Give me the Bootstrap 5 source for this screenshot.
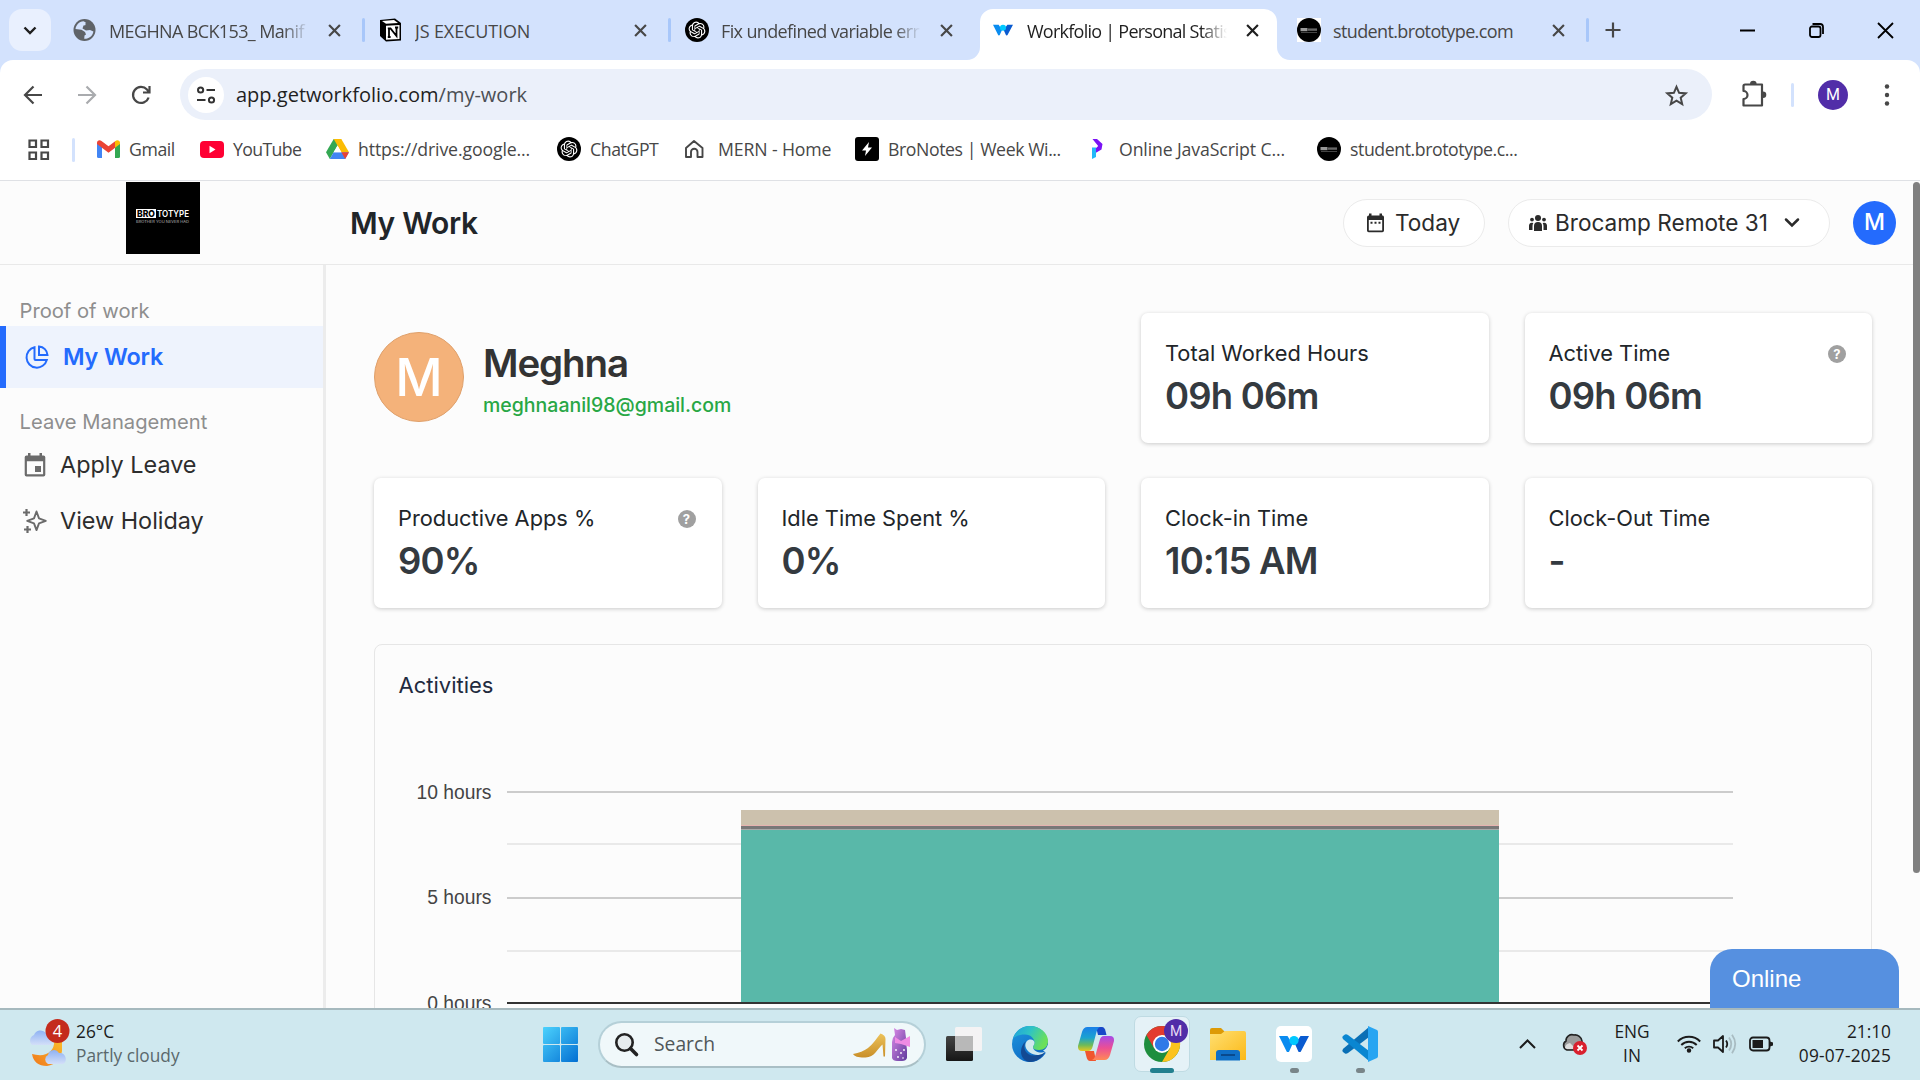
<!DOCTYPE html>
<html lang="en">
<head>
<meta charset="utf-8">
<meta name="viewport" content="width=device-width, initial-scale=1">
<title>Workfolio | Personal Statistics</title>
<link href="https://cdn.jsdelivr.net/npm/bootstrap@5.3.0/dist/css/bootstrap.min.css" rel="stylesheet">
<style>
  body { width: 1920px; height: 1080px; overflow: hidden; background: #fff; font-family: "Open Sans", "Noto Sans", sans-serif; color: #1f1f1f; }
  svg { display: block; flex: none; overflow: visible; }
  .nw { white-space: nowrap; flex: none; }
  .ls-1 { letter-spacing: -.13px; } .ls-4 { letter-spacing: -.42px; } .ls-6 { letter-spacing: -.63px; } .ls-7 { letter-spacing: -.75px; } .ls-p { letter-spacing: .2px; }

  /* browser tabs */
  .tabstrip { height: 60px; background: #d3e2fd; }
  .tab-search { width: 42px; height: 42px; margin-left: 9px; border-radius: 13px; background: #e9f0fe; }
  .tabs-row { margin-left: 7px; }
  .browser-tab { width: 306px; height: 60px; position: relative; padding-left: 15px; font-size: 18px; color: #474747; }
  .browser-tab .favi { width: 24px; height: 24px; flex: none; margin-right: 12px; }
  .browser-tab .tab-text { width: 202px; overflow: hidden; white-space: nowrap; line-height: 30px; padding-top: 2px; }
  .browser-tab .fade-end { -webkit-mask-image: linear-gradient(90deg, #000 86%, transparent 99%); mask-image: linear-gradient(90deg, #000 86%, transparent 99%); }
  .browser-tab .tab-x { margin-left: 17px; }
  .browser-tab.sep::after { content: ""; position: absolute; right: -1px; top: 18px; width: 3px; height: 24px; border-radius: 2px; background: #a8c7fa; }
  .browser-tab.current { color: #1f1f1f; z-index: 1; }
  .browser-tab.current .tab-shape { position: absolute; left: -9px; top: 9px; z-index: -1; }
  .win-btns { margin-left: auto; margin-right: 27px; gap: 54px; }

  /* toolbar */
  .toolbar-wrap { background: #d3e2fd; height: 60px; }
  .toolbar { height: 60px; border-radius: 13px 13px 0 0; padding: 9px 0 0 22px; background: #fff; }
  .nav-arrows { gap: 32px; }
  .omnibox { width: 1532px; height: 51px; margin-left: 28px; border-radius: 26px; background: #ebf0fa; padding-left: 8px; padding-right: 24px; flex: none; }
  .site-info { width: 36px; height: 36px; border-radius: 50%; background: #fff; }
  .url-text { font-size: 20px; margin-left: 12px; }
  .url-text span { color: #4c4f55; }
  .v-line { width: 3px; height: 24px; border-radius: 2px; background: #d3e2fd; flex: none; }
  .puzzle { margin-left: 25px; margin-right: 24px; }
  .profile-m { width: 30px; height: 30px; margin: 0 36px 0 24px; border-radius: 50%; background: #512da8; color: #fff; font-size: 16px; font-family: Roboto, sans-serif; }

  /* bookmarks */
  .bookmarks { height: 61px; border-bottom: 1px solid #dfe1e5; padding: 0 0 1px 28px; font-size: 17.7px; color: #474747; background: #fff; }
  .bookmarks .v-line { margin: 0 22px; }
  .bm svg { margin-right: 9px; }
  .bm:nth-of-type(2) { width: 103px; } .bm:nth-of-type(3) { width: 126px; } .bm:nth-of-type(4) { width: 231px; }
  .bm:nth-of-type(5) { width: 126px; } .bm:nth-of-type(6) { width: 172px; } .bm:nth-of-type(7) { width: 233px; }
  .bm:nth-of-type(8) { width: 229px; }

  /* application */
  .app { height: 827px; width: 1920px; background: #fcfcfc; font-family: Inter, "Liberation Sans", sans-serif; position: relative; overflow: hidden; }
  .app-header { height: 84px; width: 1913px; border-bottom: 1px solid #e9e9e9; padding-right: 17px; }
  .brand-tile { width: 74px; height: 72px; margin: 1px 0 0 126px; background: #000; color: #fff; }
  .page-title { font-size: 30px; font-weight: 600; letter-spacing: -.3px; margin-left: 150px; padding-top: 2px; color: #212529; }
  .pill-btn { height: 48px; border: 1px solid #ebebeb; border-radius: 24px; background: #fff; font-size: 22.6px; color: #2b2b2b; flex: none; }
  .pill-day { width: 142px; padding: 0 0 0 22px; gap: 10px; margin-right: 23px; }
  .pill-team { width: 322px; padding: 0 0 0 20px; margin-right: 23px; }
  .pill-team .nw { margin: 0 16px 0 8px; }
  .user-dot { width: 43px; height: 44px; border-radius: 50%; background: #246bfd; color: #fff; font-size: 23px; font-weight: 500; flex: none; }
  .scroll-thumb { position: absolute; right: 0; top: 1px; width: 7px; height: 691px; border-radius: 4px; background: #808080; }

  .side { width: 326px; height: 743px; border-right: 3px solid #ececec; padding-top: 31px; }
  .side-label { font-size: 20.2px; line-height: 30px; color: #8e8e8e; padding-left: 19.5px; }
  .side-label.later { padding-top: 19px; }
  .side-item { height: 56px; font-size: 23.4px; color: #2d2d2d; padding-left: 23px; gap: 13px; }
  .side-item.on { height: 62px; border-left: 6px solid #246bfd; padding-left: 19px; gap: 14px; background: #eef3fd; color: #246bfd; font-weight: 600; letter-spacing: -.15px; }

  .content { width: 1498px; margin-left: 48px; padding-top: 48px; }
  .stat-grid { display: grid; grid-template-columns: repeat(4, 347.5px); column-gap: 36px; row-gap: 35px; }
  .person { grid-column: span 2; gap: 19px; }
  .big-avatar { width: 90px; height: 90px; margin-bottom: 2px; border-radius: 50%; background: #f4b27a; border: 1px solid #dfa06b; color: #fff; font-size: 52px; font-weight: 500; padding-top: 2px; }
  .person-name { font-size: 38.5px; font-weight: 600; letter-spacing: -1.1px; line-height: 50px; color: #333; }
  .person-mail { font-size: 19.5px; font-weight: 500; line-height: 34px; color: #28a745; }
  .stat { height: 130px; border: 0; border-radius: 7px; background: #fff; box-shadow: 0 1px 4px rgba(0,0,0,.2); padding: 25px 26px 0 24px; }
  .stat-label { font-size: 21.8px; line-height: 30px; color: #212529; }
  .stat-value { font-size: 36.5px; font-weight: 600; letter-spacing: -.8px; line-height: 46px; margin-top: 5px; color: #343a40; }
  .qmark { width: 18px; height: 18px; margin-top: 2px; border-radius: 50%; background: #a0a0a0; color: #fff; font-size: 13px; font-weight: 700; line-height: 18px; }
  .activity { height: 420px; margin-top: 36px; border: 1px solid #e6e6e6; border-radius: 8px; background: transparent; }
  .activity-title { font-size: 22px; line-height: 30px; padding: 25px 0 0 23.5px; color: #212a3e; }
  .axis { font-family: "Liberation Sans", Arial, sans-serif; font-size: 19.3px; fill: #444; }
  .online-tab { position: absolute; left: 1710px; bottom: 0; width: 189px; height: 59px; border-radius: 22px 22px 0 0; background: #5690e0; color: #fff; font-family: "Liberation Sans", Arial, sans-serif; font-size: 24px; padding-left: 22px; }

  /* taskbar */
  .taskbar { height: 72px; background: #cfe8ef; border-top: 2px solid #a6b9be; padding-bottom: 2px; }
  .tb-text { font-size: 17.3px; line-height: 24px; color: #1b1b1b; }
  .weather { width: 543px; padding-left: 28px; gap: 6px; }
  .weather .dim { color: #5b686c; }
  .search-pill { width: 328px; height: 47px; border: 2px solid #b5d0d8; border-bottom-color: #a9bfc5; border-radius: 24px; background: #f0f8fa; margin: 0 5px 0 20px; padding: 0 13px 0 15px; font-size: 19.3px; color: #505759; }
  .task-app { width: 66px; height: 70px; position: relative; }
  .task-app .tile { position: absolute; left: 5px; top: 7px; width: 56px; height: 56px; border-radius: 7px; background: #e5f2f7; border: 1px solid #bfdbe3; }
  .task-app .run { position: absolute; left: 28.5px; top: 59px; width: 9px; height: 5px; border-radius: 3px; background: #798589; }
  .task-app .run.wide { left: 21px; width: 24px; background: #23808f; }
  .tray { margin-left: auto; padding-right: 29px; }
  .tray-lang { width: 60px; margin: 0 15px 0 14px; }
  .tray-status { gap: 12px; }
  .tray-clock { width: 118px; }
</style>
<script src="https://cdn.jsdelivr.net/npm/bootstrap@5.3.0/dist/js/bootstrap.bundle.min.js"></script>
</head>
<body>
<svg width="0" height="0" class="position-absolute">
  <defs>
    <symbol id="x" viewBox="0 0 12 12"><path d="M1 1l10 10M11 1L1 11" stroke="currentColor" stroke-width="2" fill="none"/></symbol>
    <symbol id="gpt" viewBox="0 0 24 24"><circle cx="12" cy="12" r="12" fill="#000"/>
      <path transform="translate(3.600 3.600) scale(.7)" fill="#fff" d="M22.2819 9.8211a5.9847 5.9847 0 0 0-.5157-4.9108 6.0462 6.0462 0 0 0-6.5098-2.9A6.0651 6.0651 0 0 0 4.9807 4.1818a5.9847 5.9847 0 0 0-3.9977 2.9 6.0462 6.0462 0 0 0 .7427 7.0966 5.98 5.98 0 0 0 .511 4.9107 6.051 6.051 0 0 0 6.5146 2.9001A5.9847 5.9847 0 0 0 13.2599 24a6.0557 6.0557 0 0 0 5.7718-4.2058 5.9894 5.9894 0 0 0 3.9977-2.9001 6.0557 6.0557 0 0 0-.7475-7.0729zm-9.022 12.6081a4.4755 4.4755 0 0 1-2.8764-1.0408l.1419-.0804 4.7783-2.7582a.7948.7948 0 0 0 .3927-.6813v-6.7369l2.02 1.1686a.071.071 0 0 1 .038.052v5.5826a4.504 4.504 0 0 1-4.4945 4.4944zm-9.6607-4.1254a4.4708 4.4708 0 0 1-.5346-3.0137l.142.0852 4.783 2.7582a.7712.7712 0 0 0 .7806 0l5.8428-3.3685v2.3324a.0804.0804 0 0 1-.0332.0615L9.74 19.9502a4.4992 4.4992 0 0 1-6.1408-1.6464zM2.3408 7.8956a4.485 4.485 0 0 1 2.3655-1.9728V11.6a.7664.7664 0 0 0 .3879.6765l5.8144 3.3543-2.0201 1.1685a.0757.0757 0 0 1-.071 0l-4.8303-2.7865A4.504 4.504 0 0 1 2.3408 7.872zm16.5963 3.8558L13.1038 8.364 15.1192 7.2a.0757.0757 0 0 1 .071 0l4.8303 2.7913a4.4944 4.4944 0 0 1-.6765 8.1042v-5.6772a.79.79 0 0 0-.407-.667zm2.0107-3.0231l-.142-.0852-4.7735-2.7818a.7759.7759 0 0 0-.7854 0L9.409 9.2297V6.8974a.0662.0662 0 0 1 .0284-.0615l4.8303-2.7866a4.4992 4.4992 0 0 1 6.6802 4.66zM8.3065 12.863l-2.02-1.1638a.0804.0804 0 0 1-.038-.0567V6.0742a4.4992 4.4992 0 0 1 7.3757-3.4537l-.142.0805L8.704 5.459a.7948.7948 0 0 0-.3927.6813zm1.0976-2.3654l2.602-1.4998 2.6069 1.4998v2.9994l-2.5974 1.4997-2.6067-1.4997Z"/></symbol>
    <symbol id="bro" viewBox="0 0 24 24"><circle cx="12" cy="12" r="12" fill="#000"/><rect x="3.500" y="10" width="7" height="3.200" fill="#999"/><rect x="11" y="10.400" width="9" height="2.400" fill="#666"/><rect x="4" y="14" width="16" height=".8" fill="#555"/></symbol>
    <symbol id="wf" viewBox="0 0 30 16"><path d="M0 0h8.500l5 8-3.200 7.200a1.500 1.500 0 0 1-2.800 0z" fill="#0a8cf0"/><path d="M30 0h-8.500l-5.500 8 3.200 7.200a1.500 1.500 0 0 0 2.800 0z" fill="#0a5bd0"/><circle cx="15" cy="4.600" r="4.600" fill="#00c8ff"/></symbol>
    <linearGradient id="win" gradientUnits="userSpaceOnUse" x1="0" y1="0" x2="35" y2="35"><stop offset="0" stop-color="#4cd2fd"/><stop offset="1" stop-color="#036fd2"/></linearGradient>
    <linearGradient id="cl" x1="0" y1="0" x2="0" y2="1"><stop offset="0" stop-color="#8fb2f3"/><stop offset="1" stop-color="#d3dff8"/></linearGradient>
    <linearGradient id="moon" x1="0" y1="1" x2="1" y2="0"><stop offset="0" stop-color="#f0781c"/><stop offset="1" stop-color="#fbc02d"/></linearGradient>
    <linearGradient id="e1" x1="0" y1="0" x2="1" y2=".4"><stop offset="0" stop-color="#1e9fe0"/><stop offset=".5" stop-color="#2fc3c4"/><stop offset="1" stop-color="#6be05a"/></linearGradient>
    <linearGradient id="e2" x1="0" y1="0" x2=".6" y2="1"><stop offset="0" stop-color="#1f97de"/><stop offset="1" stop-color="#0d68c4"/></linearGradient>
    <linearGradient id="c1" x1="0" y1="0" x2="0" y2="1"><stop offset="0" stop-color="#1a7fe8"/><stop offset=".45" stop-color="#1ba3d0"/><stop offset=".75" stop-color="#6cba5a"/><stop offset="1" stop-color="#e8c81e"/></linearGradient>
    <linearGradient id="c2" x1="0" y1="0" x2="0" y2="1"><stop offset="0" stop-color="#a54be8"/><stop offset=".5" stop-color="#ec4f94"/><stop offset="1" stop-color="#ff8a55"/></linearGradient>
    <linearGradient id="fold" x1="0" y1="0" x2="1" y2="1"><stop offset="0" stop-color="#ffdf72"/><stop offset="1" stop-color="#fbb917"/></linearGradient>
    <linearGradient id="perf" x1="0" y1="0" x2="1" y2="1"><stop offset="0" stop-color="#dc8be8"/><stop offset="1" stop-color="#5e3a9c"/></linearGradient>
    <linearGradient id="shoe" x1="0" y1="0" x2="0" y2="1"><stop offset="0" stop-color="#ecc25a"/><stop offset="1" stop-color="#c98f28"/></linearGradient>
    <linearGradient id="tv" x1="0" y1="0" x2="0" y2="1"><stop offset="0" stop-color="#444"/><stop offset="1" stop-color="#161616"/></linearGradient>
  </defs>
</svg>

<!-- tab strip -->
<div class="tabstrip d-flex align-items-center">
  <button class="btn p-0 tab-search d-flex align-items-center justify-content-center border-0"><svg width="14" height="9" viewBox="0 0 14 9"><path d="M1.500 1.500L7 7l5.500-5.500" fill="none" stroke="#1f1f1f" stroke-width="2.400"/></svg></button>
  <div class="tabs-row d-flex">
    <div class="browser-tab sep d-flex align-items-center">
      <svg class="favi" viewBox="0 0 24 24"><circle cx="11.500" cy="12" r="11" fill="#5f6368"/><path d="M10.500 3.200C6 3.500 3 7 2.500 11l6 .8 3.500 2.200 1 2.500-1.500 1-.3 3.300c5 .2 8.500-3 9.200-7.300l-3.400-1.500-4 .5-3.500-2 1-3 3-.5.5-2z" fill="#d3e2fd"/><path d="M12.500 4.500l2-1 3.500 2 2 4.500-4.500.5-3-2z" fill="#5f6368"/></svg>
      <div class="tab-text fade-end"><span class="nw ls-6">MEGHNA BCK153_ Manif</span></div><svg class="tab-x" width="13" height="13"><use href="#x"/></svg>
    </div>
    <div class="browser-tab sep d-flex align-items-center">
      <svg class="favi" viewBox="0 0 24 24"><path d="M1 2l15-1.500L22 5v17.500L7 23.500 1 18z" fill="#000"/><path d="M3 3l12-1 4 3-12 .8z" fill="#fff"/><path d="M7 7.800l13.500-.9v14l-13.500.9z" fill="#fff"/><path d="M10 19v-8.500l1.500 0L17.500 18V9.500M8.800 10.400h3M16 9.500h3.200M8.800 19h2.800" fill="none" stroke="#000" stroke-width="1.800"/></svg>
      <div class="tab-text"><span class="nw ls-1">JS EXECUTION</span></div><svg class="tab-x" width="13" height="13"><use href="#x"/></svg>
    </div>
    <div class="browser-tab d-flex align-items-center">
      <svg class="favi"><use href="#gpt"/></svg>
      <div class="tab-text fade-end"><span class="nw ls-6">Fix undefined variable err</span></div><svg class="tab-x" width="13" height="13"><use href="#x"/></svg>
    </div>
    <div class="browser-tab current d-flex align-items-center">
      <svg class="tab-shape" width="323" height="51" viewBox="0 0 323 51"><path d="M0 51a13 13 0 0 0 13-13V13A13 13 0 0 1 26 0h271a13 13 0 0 1 13 13v25a13 13 0 0 0 13 13z" fill="#fff"/></svg>
      <svg class="favi" viewBox="0 0 24 24"><use href="#wf" x="2" y="6" width="20" height="12"/></svg>
      <div class="tab-text fade-end"><span class="nw ls-7">Workfolio | Personal Statis</span></div><svg class="tab-x" width="13" height="13"><use href="#x"/></svg>
    </div>
    <div class="browser-tab sep d-flex align-items-center">
      <svg class="favi"><rect width="24" height="24" fill="#fff"/><use href="#bro"/></svg>
      <div class="tab-text"><span class="nw ls-6">student.brototype.com</span></div><svg class="tab-x" width="13" height="13"><use href="#x"/></svg>
    </div>
  </div>
  <svg class="ms-3" width="18" height="18" viewBox="0 0 18 18"><path d="M9 1.500v15M1.500 9h15" stroke="#474747" stroke-width="2.200"/></svg>
  <div class="win-btns d-flex align-items-center">
    <svg width="15" height="15"><path d="M0 7.500h15" stroke="#000" stroke-width="2"/></svg>
    <svg width="15" height="15" viewBox="0 0 15 15" fill="none" stroke="#000" stroke-width="1.800"><rect x="1" y="3.500" width="10.500" height="10.500" rx="2"/><path d="M3.500 1H11a3 3 0 0 1 3 3v7"/></svg>
    <svg width="15" height="15"><path d="M0 0l15 15M15 0L0 15" stroke="#000" stroke-width="1.800"/></svg>
  </div>
</div>

<!-- toolbar -->
<div class="toolbar-wrap">
  <div class="toolbar d-flex align-items-center">
    <div class="nav-arrows d-flex">
      <svg width="22" height="22" viewBox="0 0 22 22" fill="none" stroke="#474747" stroke-width="2.200"><path d="M20 11H3.500M11.500 2.500L3 11l8.500 8.500"/></svg>
      <svg width="22" height="22" viewBox="0 0 22 22" fill="none" stroke="#a9abae" stroke-width="2.200"><path d="M2 11h16.500M10.500 2.500L19 11l-8.500 8.500"/></svg>
      <svg width="22" height="22" viewBox="0 0 22 22" fill="none" stroke="#474747" stroke-width="2.200"><path d="M18.600 13.500A8 8 0 1 1 17 5.600L19 8M19.500 2v6.500H13"/></svg>
    </div>
    <div class="omnibox d-flex align-items-center">
      <div class="site-info d-flex align-items-center justify-content-center"><svg width="18" height="18" viewBox="0 0 18 18" fill="none" stroke="#333" stroke-width="2"><circle cx="3.600" cy="4" r="2.600"/><path d="M9.500 4H18M0 14h8.500"/><circle cx="14.500" cy="14" r="2.600"/></svg></div>
      <div class="url-text nw">app.getworkfolio.com<span>/my-work</span></div>
      <svg class="ms-auto" width="23" height="22" viewBox="0 0 23 22"><path d="M11.500 2.800l2.600 6 6.600.6-5 4.300 1.500 6.400-5.700-3.400-5.700 3.400 1.500-6.400-5-4.300 6.600-.6z" fill="none" stroke="#474747" stroke-width="2"/></svg>
    </div>
    <svg class="puzzle" width="30" height="28" viewBox="-4 1 30 28"><path d="M4 4.500h17v21H2.500v-6.500a3.500 3.500 0 0 0 0-8V6A1.500 1.500 0 0 1 4 4.500z" fill="none" stroke="#474747" stroke-width="2.200" stroke-linejoin="round"/><path d="M9 4a3.300 3.300 0 0 1 6.600 0zM22 11.500a3.300 3.300 0 0 1 0 6.600z" fill="#474747"/></svg>
    <div class="v-line"></div>
    <div class="profile-m d-flex align-items-center justify-content-center">M</div>
    <svg width="6" height="26" fill="#474747"><circle cx="3" cy="4.500" r="2.200"/><circle cx="3" cy="13" r="2.200"/><circle cx="3" cy="21.500" r="2.200"/></svg>
  </div>
</div>

<!-- bookmarks bar -->
<nav class="bookmarks d-flex align-items-center">
  <svg width="22" height="22" fill="none" stroke="#474747" stroke-width="2.200"><path d="M1.500 1.500h6.500v6.500H1.500zM13.500 1.500H20v6.500h-6.500zM1.500 13.500h6.500V20H1.500zM13.500 13.500H20V20h-6.500z"/></svg>
  <div class="v-line"></div>
  <div class="bm d-flex align-items-center"><svg width="23" height="18" viewBox="0 0 23 18"><path d="M0 3v13.500A1.500 1.500 0 0 0 1.500 18H5V7z" fill="#4285f4"/><path d="M23 3v13.500a1.500 1.500 0 0 1-1.500 1.500H18V7z" fill="#34a853"/><path d="M0 3C0 .5 2.500-.5 4.500 1L11.500 6.300 18.500 1v6.500l-7 5.200L0 4z" fill="#ea4335"/><path d="M18 1.200C20.500-.6 23 .5 23 3v1L18 7.800z" fill="#fbbc04"/></svg><span class="nw ls-4">Gmail</span></div>
  <div class="bm d-flex align-items-center"><svg width="24" height="17" viewBox="0 0 24 17"><rect width="24" height="17" rx="4" fill="#ff0033"/><path d="M9.500 4.800v7.400l6-3.700z" fill="#fff"/></svg><span class="nw ls-6">YouTube</span></div>
  <div class="bm d-flex align-items-center"><svg width="23" height="20" viewBox="0 0 23 20"><path d="M7.700 0L0 13.300l3.800 6.700L15.300 0z" fill="#34a853"/><path d="M7.700 0h7.600L23 13.300h-7.600z" fill="#fbbc04"/><path d="M7.600 13.300H23L19.200 20H3.800z" fill="#4285f4"/><path d="M15.400 13.300H23L19.200 20z" fill="#ea4335"/><path d="M11.500 6.700L7.600 13.300h7.800z" fill="#fff"/></svg><span class="nw ls-1">https://drive.google...</span></div>
  <div class="bm d-flex align-items-center"><svg width="24" height="24"><use href="#gpt"/></svg><span class="nw ls-4">ChatGPT</span></div>
  <div class="bm d-flex align-items-center"><svg width="22" height="18" viewBox="-2 0 22 18"><path d="M1 8l8-7 8.500 7v9h-5v-5a3.200 3.200 0 0 0-6.500 0v5H1z" fill="none" stroke="#474747" stroke-width="1.900" stroke-linejoin="round"/></svg><span class="nw ms-1 ls-1">MERN - Home</span></div>
  <div class="bm d-flex align-items-center"><svg width="24" height="24"><rect width="24" height="24" rx="3" fill="#000"/><path d="M14 5l-7 8.500h4L10 19l7-8.500h-4z" fill="#fff"/></svg><span class="nw ls-4">BroNotes | Week Wi...</span></div>
  <div class="bm d-flex align-items-center"><svg width="22" height="22" viewBox="-4 -1 22 22"><path d="M.5 0H5l5.500 5-1 5.500L3.500 14V9.500L6.200 7z" fill="#7a12f5"/><path d="M0 8.500h4V18l-4 2z" fill="#22b8f8"/></svg><span class="nw ls-1">Online JavaScript C...</span></div>
  <div class="bm d-flex align-items-center"><svg width="24" height="24"><use href="#bro"/></svg><span class="nw ls-4">student.brototype.c...</span></div>
</nav>

<!-- Workfolio application -->
<main class="app">
  <header class="app-header d-flex align-items-center">
    <div class="brand-tile align-self-start"><svg width="74" height="72" viewBox="0 0 74 72"><rect x="10" y="27" width="20" height="9" fill="#fff"/><text x="11" y="34.800" font-size="9" font-weight="800" textLength="18" lengthAdjust="spacingAndGlyphs" fill="#000">BRO</text><text x="31" y="35" font-size="9" font-weight="600" textLength="32" lengthAdjust="spacingAndGlyphs" fill="#fff">TOTYPE</text><text x="10" y="41" font-size="3.600" textLength="53" lengthAdjust="spacingAndGlyphs" fill="#bbb">BROTHER YOU NEVER HAD</text></svg></div>
    <div class="page-title nw">My Work</div>
    <button class="btn pill-btn pill-day d-flex align-items-center ms-auto"><svg width="19" height="21" viewBox="0 0 19 20"><path d="M3 1h2.500v2h8V1H16v2h1a2 2 0 0 1 1 1.700V18a1.700 1.700 0 0 1-1.700 1.700H2.700A1.700 1.700 0 0 1 1 18V4.700A1.700 1.700 0 0 1 2.700 3H3zM2.800 7.500V18h13.400V7.500z" fill="#2b2b2b" fill-rule="evenodd"/><path d="M4.500 9.200h2v2h-2zM8.500 9.200h2v2h-2zM12.500 9.200h2v2h-2z" fill="#2b2b2b"/></svg><span class="nw">Today</span></button>
    <button class="btn pill-btn pill-team d-flex align-items-center"><svg width="18" height="16" viewBox="0 0 18 16" fill="#2b2b2b"><circle cx="9" cy="3" r="3"/><circle cx="3" cy="4.600" r="1.900"/><circle cx="15" cy="4.600" r="1.900"/><path d="M5 16v-5a4 4 0 0 1 8 0v5zM0 15V10.500A3 3 0 0 1 4.300 8Q3.500 9.500 3.500 11v4zM18 15v-4.500A3 3 0 0 0 13.700 8q.8 1.500.8 3v4z"/></svg><span class="nw">Brocamp Remote 31</span><svg width="16" height="10" viewBox="0 0 16 10"><path d="M2 1.500l6 6 6-6" fill="none" stroke="#2b2b2b" stroke-width="2.500" stroke-linecap="round"/></svg></button>
    <div class="user-dot d-flex align-items-center justify-content-center">M</div>
  </header>
  <div class="d-flex">
    <aside class="side">
      <div class="side-label nw">Proof of work</div>
      <a class="side-item on d-flex align-items-center text-decoration-none"><svg width="24" height="24" viewBox="0 0 24 24" fill="none" stroke="#246bfd" stroke-width="2"><path d="M9.500 2.300A10.300 10.300 0 1 0 21.800 15H10.500a1 1 0 0 1-1-1z"/><path d="M14 1.500v8.500h8.500A9 9 0 0 0 14 1.500z"/></svg><span class="nw">My Work</span></a>
      <div class="side-label later nw">Leave Management</div>
      <a class="side-item d-flex align-items-center text-decoration-none"><svg width="24" height="24" viewBox="-1 0 24 24"><path d="M4 0h2.500v2.500h9V0H18v2.500h1.500A1.800 1.800 0 0 1 21.300 4.300v17.400a1.800 1.800 0 0 1-1.800 1.800h-17A1.800 1.800 0 0 1 .7 21.700V4.300A1.800 1.800 0 0 1 2.500 2.500H4zM2.900 8.300v13h16.200v-13z" fill="#6b6b6b" fill-rule="evenodd"/><rect x="11" y="13" width="6" height="6" fill="#6b6b6b"/></svg><span class="nw">Apply Leave</span></a>
      <a class="side-item d-flex align-items-center text-decoration-none"><svg width="24" height="24" viewBox="0 0 24 24"><path d="M13.500 2.500l2.500 6.800 6.800 2.500-6.800 2.500-2.500 6.800-2.500-6.800-6.800-2.500 6.800-2.500z" fill="none" stroke="#6b6b6b" stroke-width="1.900" stroke-linejoin="round"/><path d="M3.500 0v7M0 3.500h7M4.500 17v7M1 20.500h7" stroke="#6b6b6b" stroke-width="2.200"/></svg><span class="nw">View Holiday</span></a>
    </aside>
    <section class="content">
      <div class="stat-grid">
        <div class="person d-flex align-items-center">
          <div class="big-avatar d-flex align-items-center justify-content-center">M</div>
          <div class="pt-1"><div class="person-name nw">Meghna</div><div class="person-mail nw">meghnaanil98@gmail.com</div></div>
        </div>
        <div class="card stat"><div class="stat-label nw">Total Worked Hours</div><div class="stat-value">09h 06m</div></div>
        <div class="card stat"><div class="stat-label d-flex justify-content-between align-items-center"><span class="nw">Active Time</span><span class="qmark text-center">?</span></div><div class="stat-value">09h 06m</div></div>
        <div class="card stat"><div class="stat-label d-flex justify-content-between align-items-center"><span class="nw">Productive Apps %</span><span class="qmark text-center">?</span></div><div class="stat-value">90%</div></div>
        <div class="card stat"><div class="stat-label nw">Idle Time Spent %</div><div class="stat-value">0%</div></div>
        <div class="card stat"><div class="stat-label nw">Clock-in Time</div><div class="stat-value">10:15 AM</div></div>
        <div class="card stat"><div class="stat-label nw">Clock-Out Time</div><div class="stat-value">-</div></div>
      </div>
      <div class="card activity">
        <div class="activity-title nw">Activities</div>
        <svg width="1496" height="330" viewBox="375 700 1496 330" shape-rendering="crispEdges">
          <g fill="#ccc"><rect x="507" y="791" width="1226" height="1.500"/><rect x="507" y="897" width="1226" height="1.500"/></g>
          <g fill="#e9e9e9"><rect x="507" y="843" width="1226" height="2"/><rect x="507" y="950" width="1226" height="2"/></g>
          <rect x="741" y="810" width="758" height="15" fill="#ccc1ad"/>
          <rect x="741" y="825" width="758" height="1" fill="#e6b3b0"/>
          <rect x="741" y="826" width="758" height="3" fill="#787878"/>
          <rect x="741" y="829" width="758" height="1" fill="#a7aaa9"/>
          <rect x="741" y="830" width="758" height="173" fill="#59b8a9"/>
          <rect x="507" y="1002" width="1226" height="2" fill="#333"/>
          <g class="axis" text-anchor="end"><text x="491.500" y="799">10 hours</text><text x="491.500" y="904">5 hours</text><text x="491.500" y="1010">0 hours</text></g>
        </svg>
      </div>
    </section>
  </div>
  <div class="scroll-thumb"></div>
  <div class="online-tab d-flex align-items-center">Online</div>
</main>

<!-- taskbar -->
<footer class="taskbar d-flex align-items-center">
  <div class="weather d-flex align-items-center">
    <svg width="42" height="44" viewBox="28 1021 42 44"><path d="M32 1044a6 6 0 0 1 2-10 7 7 0 0 1 12-2 8 8 0 0 1 5 12z" fill="url(#cl)"/><path d="M54 1036q2 15-11 18-6 .5-11-1 2 12 15 12 13-2 15-15V1036z" fill="url(#moon)"/><path d="M48 1063a5 5 0 0 1 0-9 6 6 0 0 1 11-2 6 6 0 0 1 4 11z" fill="url(#cl)"/><circle cx="57.500" cy="1030" r="12" fill="#c42b1c"/><text x="57.500" y="1036" text-anchor="middle" font-size="16.500" fill="#fff">4</text></svg>
    <div class="tb-text"><div class="nw">26°C</div><div class="dim nw">Partly cloudy</div></div>
  </div>
  <svg width="35" height="35" viewBox="0 0 35 35" fill="url(#win)"><rect width="17" height="17" rx="1"/><rect x="18" width="17" height="17" rx="1"/><rect y="18" width="17" height="17" rx="1"/><rect x="18" y="18" width="17" height="17" rx="1"/></svg>
  <div class="search-pill d-flex align-items-center">
    <svg width="23" height="23" viewBox="0 0 23 23" fill="none" stroke="#222" stroke-width="2.600"><circle cx="9.500" cy="9.500" r="8.200" fill="#e6ecee"/><path d="M15.500 15.500l6 6" stroke-width="3.600" stroke-linecap="round"/></svg>
    <span class="nw ms-3">Search</span>
    <svg class="ms-auto" width="58" height="36" viewBox="854 1026 58 36"><path d="M854 1054c6-1 11-3 15-6 5-4 9-10 12.500-14.500q5 1.500 5 5.500l-.5 17.500h-1.500l-1-12c-5 4-8 13-17 13-5 0-10 0-12.500-3.500z" fill="url(#shoe)"/><path d="M895 1028l3 2 4-1 4 1 1 8 1 4q-1 4 0 8v8q-1 3-5 3h-5q-4 0-5-3v-16q0-4 3-7z" fill="url(#perf)"/><path d="M902 1041l-6-4v6l6 1 9 3V1036z" fill="#f08be4"/><g fill="#fff"><circle cx="897" cy="1050" r=".9"/><circle cx="902" cy="1053" r=".9"/><circle cx="899" cy="1057" r=".9"/><circle cx="905" cy="1050" r=".9"/><circle cx="904" cy="1058" r=".8"/></g></svg>
  </div>
  <div class="d-flex align-items-center">
    <div class="task-app d-flex align-items-center justify-content-center"><svg width="36" height="36" viewBox="946 1026 36 36"><rect x="946" y="1036" width="27" height="25" rx="1.500" fill="url(#tv)"/><rect x="955" y="1027" width="27" height="24" rx="1.500" fill="#f4f3f4"/><rect x="955" y="1036" width="18" height="15" fill="#b8b8b8"/></svg></div>
    <div class="task-app d-flex align-items-center justify-content-center"><svg width="36" height="36" viewBox="0 0 36 36"><circle cx="18" cy="18" r="18" fill="url(#e2)"/><path d="M1 13C3 5 10 0 18 0c10 0 18 7 18 15 0 6-4 9-9 9-4 0-6-1-6-3 0-1 1.500-2 1.500-4.500C22.500 13 19 8.500 13 8.500 8 8.500 3 10 1 13z" fill="url(#e1)"/><path d="M14 15c-5 8 2 17 11 14 3-.8 5.500-2 8-3.500C30 32 24 36 18 36 8 35 6 22 14 15z" fill="#134a93"/><path d="M17.500 13.500c-3 1-4.500 4-4 7 1 5 7 9 13 8.500 2.500-.3 5-1.500 6.500-3-5 1.500-12-.5-12-5 0-1.500 1.500-2 1.500-4.500 0-2-2-3.500-5-3z" fill="#cfe8ef"/><path d="M31 24.500q3-1 5-6v10q-1 0-3-2.500z" fill="#cfe8ef"/></svg></div>
    <div class="task-app d-flex align-items-center justify-content-center"><svg width="36" height="36" viewBox="0 0 36 36"><path d="M18 1h6q2.500 0 3.500 4l1 4H20z" fill="#1848c8"/><path d="M9.500 1H22q-2.500 1-3.500 5l-4 15q-1 4-4.500 4H4q-4.500 0-4-5L4 6q1.500-5 5.500-5z" fill="url(#c1)"/><path d="M18 35h-6q-2.500 0-3.500-4L7 25h9z" fill="#f0562e"/><path d="M26.500 34H14q2.500-1 3.500-5l4-14q1-5 4.500-5h6q4.500 0 4 5l-4 14q-1.500 5-5.500 5z" fill="url(#c2)"/></svg></div>
    <div class="task-app d-flex align-items-center justify-content-center"><div class="tile"></div><svg class="position-relative" width="36" height="36" viewBox="0 0 36 36"><circle cx="18" cy="18" r="18" fill="#1e8e3e"/><path d="M18 18L2.400 9A18 18 0 0 1 33.600 9z" fill="#e33b2e"/><path d="M33.600 9A18 18 0 0 1 18 36l7.800-13.500L18 9z" fill="#fcc31e"/><path d="M2.400 9L10 22l2-13z" fill="#e33b2e"/><circle cx="18" cy="18" r="9" fill="#fff"/><circle cx="18" cy="18" r="7.200" fill="#2f7ae8"/><circle cx="32" cy="5" r="12" fill="#512da8"/><text x="32" y="10" text-anchor="middle" font-family="Roboto" font-size="14" fill="#e6dcf5">M</text></svg><div class="run wide"></div></div>
    <div class="task-app d-flex align-items-center justify-content-center"><svg width="36" height="36" viewBox="0 0 36 36"><path d="M0 4q0-2 2-2h9l4 4-3 3H0z" fill="#dd9a06"/><path d="M0 8h11l4-3h19q2 0 2 2v27H0z" fill="url(#fold)"/><path d="M6 34.500V27q0-3 3-3h18q3 0 3 3v7.500z" fill="#0f6fc6"/><path d="M11 29h14" stroke="#0a4686" stroke-width="1.800"/></svg></div>
    <div class="task-app d-flex align-items-center justify-content-center"><svg width="36" height="36" viewBox="0 0 36 36"><rect width="36" height="36" rx="5" fill="#fff"/><use href="#wf" x="3" y="10" width="30" height="16"/></svg><div class="run"></div></div>
    <div class="task-app d-flex align-items-center justify-content-center"><svg width="36" height="36" viewBox="0 0 36 36"><path d="M27 1L1.500 22.500q-2 2-.5 3.500l2 1.500q1.200.8 3-.5L27 11z" fill="#0a6fb5"/><path d="M27 35L1.500 13.500q-2-2-.5-3.500l2-1.500q1.200-.8 3 .5L27 25z" fill="#0a86d1"/><path d="M26 0l9 4q1 .6 1 2v24q0 1.400-1 2l-9 4z" fill="#28a5f2"/></svg><div class="run"></div></div>
  </div>
  <div class="tray d-flex align-items-center">
    <svg width="17" height="10" viewBox="0 0 17 10"><path d="M1 9l7.500-7.500L16 9" fill="none" stroke="#1b1b1b" stroke-width="2"/></svg>
    <svg class="ms-4" width="28" height="22" viewBox="-2 0 28 22"><path d="M5 17a5 5 0 0 1-1-9 6 6 0 0 1 8-6 7 7 0 0 1 8 6v9z" fill="#9b9b9b" stroke="#222" stroke-width="1.600"/><path d="M3 15q0-4 5-5l6 6H5z" fill="#ddd"/><circle cx="18" cy="15" r="7" fill="#d9202e"/><path d="M15.500 12.500l5 5M20.500 12.500l-5 5" stroke="#fff" stroke-width="1.800"/></svg>
    <div class="tb-text text-center tray-lang"><div>ENG</div><div>IN</div></div>
    <div class="tray-status d-flex align-items-center">
      <svg width="24" height="18" viewBox="0 0 24 18" fill="none" stroke="#1b1b1b" stroke-width="1.900"><path d="M.8 6.500a15.500 15.500 0 0 1 22.400 0M4.300 10a10.800 10.800 0 0 1 15.400 0M7.800 13.300a6 6 0 0 1 8.400 0"/><circle cx="12" cy="15.600" r="1.300" fill="#1b1b1b"/></svg>
      <svg width="24" height="20" viewBox="0 0 24 20" fill="none" stroke="#1b1b1b" stroke-width="1.800"><path d="M1 6.500h4L10 2v16l-5-4.500H1z" stroke-linejoin="round"/><path d="M13 6.500q2.500 3.500 0 7"/><path d="M16 3.500q4.500 6.500 0 13M19 .8q6.500 9.200 0 18.400" stroke="#a9bcc2"/></svg>
      <svg width="24" height="16" viewBox="0 0 24 16"><rect x="1" y="1.500" width="19.500" height="13" rx="3" fill="none" stroke="#1b1b1b" stroke-width="1.800"/><rect x="3.500" y="4" width="10.500" height="8" fill="#1b1b1b"/><path d="M21 5.500l3 1v3l-3 1z" fill="#1b1b1b"/></svg>
    </div>
    <div class="tb-text text-end tray-clock"><div>21:10</div><div class="nw ls-p">09-07-2025</div></div>
  </div>
</footer>
</body>
</html>
